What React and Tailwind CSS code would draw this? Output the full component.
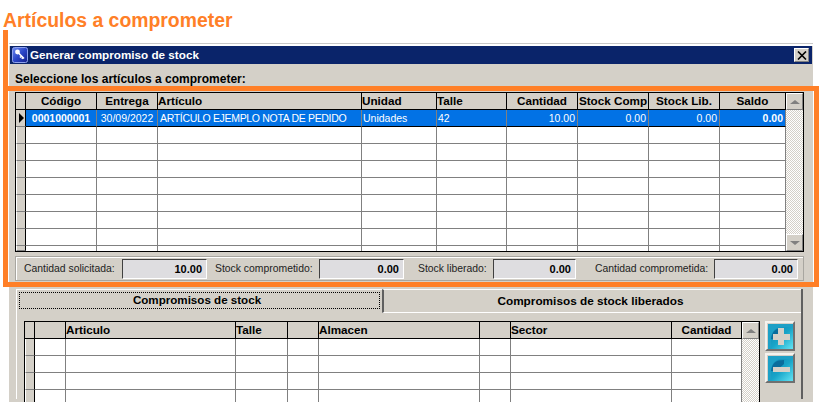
const orange = "bg-[#ff7f27]";

const topCols = "grid-cols-[10px_71px_61px_204px_75px_70px_71px_71px_71px_66px]";
const bottomCols = "grid-cols-[10px_31px_170px_52px_31px_161px_31px_161px_70px]";

const topHeaders = [
  ["", ""],
  ["Código", "text-center"],
  ["Entrega", "text-center"],
  ["Artículo", "text-left"],
  ["Unidad", "text-left"],
  ["Talle", "text-left"],
  ["Cantidad", "text-center"],
  ["Stock Comp", "text-center"],
  ["Stock Lib.", "text-center"],
  ["Saldo", "text-center"],
];

const bottomHeaders = [
  ["", ""],
  ["", ""],
  ["Articulo", "text-left"],
  ["Talle", "text-left"],
  ["", ""],
  ["Almacen", "text-left"],
  ["", ""],
  ["Sector", "text-left"],
  ["Cantidad", "text-center"],
];

const selected = [
  ["0001000001", "px-0.5 text-center font-bold"],
  ["30/09/2022", "px-0.5 text-center"],
  ["ARTÍCULO EJEMPLO NOTA DE PEDIDO", "px-0.5 text-left tracking-[-0.32px]"],
  ["Unidades", "px-px text-left"],
  ["42", "px-px text-left"],
  ["10.00", "px-0.5 text-right"],
  ["0.00", "px-0.5 text-right"],
  ["0.00", "px-0.5 text-right"],
  ["0.00", "px-0.5 text-right font-bold"],
];

function Raised({ className, children }) {
  return (
    <div className={"flex items-center justify-center bg-[#d4d0c8] border border-t-white border-l-white border-r-[#808080] border-b-[#808080] " + className}>
      {children}
    </div>
  );
}

function HeaderRow({ cols, headers }) {
  return (
    <div className={"grid h-[17px] " + cols}>
      {headers.map(([label, align], i) => (
        <div
          key={i}
          className={"h-[17px] overflow-hidden whitespace-nowrap border-r border-b border-black bg-[#d4d0c8] text-[11.7px] leading-[16px] font-bold text-black " + align}
        >
          {label}
        </div>
      ))}
    </div>
  );
}

function EmptyRow({ cols, count, height = "h-[17px]", last }) {
  return (
    <div className={"grid " + height + " " + cols}>
      <div className={"border-r border-b border-r-black border-b-[#808080] bg-[#d4d0c8] border-l border-l-white " + height} />
      {Array.from({ length: count }).map((_, i) => (
        <div key={i} className={"bg-white border-r border-[#808080] " + (last ? "" : "border-b ") + height} />
      ))}
    </div>
  );
}

function SelectedRow({ cols }) {
  return (
    <div className={"grid h-[17px] " + cols}>
      <div className="flex h-[17px] items-center justify-end border-r border-b border-r-black border-b-[#808080] bg-[#d4d0c8] pr-px">
        <div className="h-0 w-0 border-y-[5px] border-l-[5px] border-y-transparent border-l-black" />
      </div>
      {selected.map(([text, style], i) => (
        <div
          key={i}
          className={"h-[17px] overflow-hidden whitespace-nowrap border-r border-b border-[#808080] bg-[#0272e5] border-b-black text-[10.5px] leading-[16px] text-white " + style}
        >
          {text}
        </div>
      ))}
    </div>
  );
}

function Triangle({ up }) {
  return (
    <div
      className={
        "h-0 w-0 border-x-[5px] border-x-transparent " +
        (up ? "border-b-[4px] border-b-[#808080]" : "border-t-[4px] border-t-[#808080]")
      }
    />
  );
}

function ScrollBar({ withDown }) {
  return (
    <div className="flex w-[17px] flex-col bg-[repeating-conic-gradient(#d4d0c8_0_25%,#ffffff_0_50%)] bg-[length:2px_2px]">
      <Raised className="h-[17px] w-[17px] shrink-0">
        <Triangle up />
      </Raised>
      <div className="flex-1" />
      {withDown && (
        <Raised className="h-[17px] w-[17px] shrink-0">
          <Triangle />
        </Raised>
      )}
    </div>
  );
}

function SummaryField({ label, labelClass, fieldClass, value }) {
  return (
    <>
      <span className={"text-[10.4px] whitespace-nowrap text-[#222] " + labelClass}>{label}</span>
      <div className={"h-5 border border-t-[#404040] border-l-[#404040] border-r-white border-b-white bg-[#dedde0] pr-1 text-right text-[11px] leading-[19px] font-bold text-black " + fieldClass}>
        {value}
      </div>
    </>
  );
}

function KeyIcon() {
  return (
    <svg width="16" height="16" viewBox="0 0 16 16" className="shrink-0">
      <defs>
        <linearGradient id="keybg" x1="0" y1="0" x2="1" y2="1">
          <stop offset="0" stopColor="#6f8cf0" />
          <stop offset="0.5" stopColor="#2a46c8" />
          <stop offset="1" stopColor="#14208a" />
        </linearGradient>
      </defs>
      <rect x="0.5" y="0.5" width="15" height="15" rx="2" fill="url(#keybg)" stroke="#8fa3ee" />
      <circle cx="5.5" cy="5" r="2.4" fill="#fff" />
      <path d="M6.5 6 L12 11.5 M9.5 9 L8 10.5 M11 10.5 L9.8 11.8" stroke="#fff" strokeWidth="1.6" fill="none" />
    </svg>
  );
}

function ActionIcon({ id, minus }) {
  return (
    <svg width="25" height="25" viewBox="0 0 25 25">
      <defs>
        <linearGradient id={id} x1="0" y1="0" x2="1" y2="1">
          <stop offset="0" stopColor="#0d7fae" />
          <stop offset="0.55" stopColor="#18a4c8" />
          <stop offset="1" stopColor="#62e4f4" />
        </linearGradient>
      </defs>
      <rect width="25" height="25" fill={"url(#" + id + ")"} />
      <path d="M3 15 C4 6 8 3 16 3 L25 3 L25 0 L0 0 L0 25 L3 25 Z" fill="#1ea0c6" />
      <path d="M3 15 C4 7 8 4 16 4 L16 8 L8 15 Z" fill="#0a6d9c" />
      {minus ? (
        <rect x="5" y="11" width="17" height="5" fill="#d4d0c8" />
      ) : (
        <path d="M10 4 H16 V10 H22 V16 H16 V21 H10 V16 H5 V10 H10 Z" fill="#d4d0c8" />
      )}
    </svg>
  );
}

function ActionButton({ id, minus }) {
  return (
    <div className="flex h-[30px] w-[30px] items-center justify-center border-2 border-t-[#f4f2ee] border-l-[#f4f2ee] border-r-[#707070] border-b-[#707070] bg-[#d4d0c8]">
      <ActionIcon id={id} minus={minus} />
    </div>
  );
}

export default function App() {
  return (
    <div className="relative h-[402px] w-[836px] overflow-hidden bg-white font-['Liberation_Sans',Arial,sans-serif]">
      <h1 className="h-[43px] pt-[8px] pl-[3px] text-[19.4px] leading-[24px] font-bold text-[#ff7f27]">
        Artículos a comprometer
      </h1>

      <div className="ml-[9px] h-[359px] w-[804px] border-t border-[#c8c8c8]">
        <div className="h-[2px] bg-white" />
        <div className="h-[356px] border-x border-[#d4d0c8] bg-[#d4d0c8]">
          <div className="flex h-[18px] items-center gap-[2px] bg-[#0a246a] pr-[3px] pl-[2px]">
            <KeyIcon />
            <span className="flex-1 text-[11.7px] font-bold text-white">Generar compromiso de stock</span>
            <Raised className="h-[14px] w-[15px]">
              <svg width="10" height="9" viewBox="0 0 10 9">
                <path d="M1 0.5 L9 8.5 M9 0.5 L1 8.5" stroke="#000" strokeWidth="1.6" />
              </svg>
            </Raised>
          </div>

          <p className="h-7 pt-[7px] pl-[5px] text-[12px] leading-[16px] font-bold text-black">
            Seleccione los artículos a comprometer:
          </p>

          <div className="ml-[5px] flex h-[160px] w-[789px] border border-black">
            <div className="w-[770px]">
              <HeaderRow cols={topCols} headers={topHeaders} />
              <SelectedRow cols={topCols} />
              {Array.from({ length: 7 }).map((_, i) => (
                <EmptyRow key={i} cols={topCols} count={9} />
              ))}
              <EmptyRow cols={topCols} count={9} height="h-[5px]" last />
            </div>
            <ScrollBar withDown />
          </div>

          <div className="mt-1 ml-[5px] flex h-[25px] w-[789px] items-center border border-[#a8a6a0] [box-shadow:inset_1px_1px_0_#fff]">
            <SummaryField label="Cantidad solicitada:" labelClass="ml-2 w-[98px]" fieldClass="w-[85px]" value="10.00" />
            <SummaryField label="Stock comprometido:" labelClass="ml-2 w-[104px]" fieldClass="w-[85px]" value="0.00" />
            <SummaryField label="Stock liberado:" labelClass="ml-[14px] w-[75px]" fieldClass="w-[83px]" value="0.00" />
            <SummaryField label="Cantidad comprometida:" labelClass="ml-[19px] w-[119px]" fieldClass="w-[84px]" value="0.00" />
          </div>

          <div className="mt-2 ml-1.5 h-[110px] w-[787px] border-r-2 border-l border-r-[#606060] border-l-white">
            <div className="flex h-6">
              <div className="flex h-[23px] w-[365px] items-start border-t border-white px-0.5 pt-0.5">
                <div className="h-[17px] w-full border border-dotted border-black pr-[5px] text-center text-[11.6px] leading-[14px] font-bold text-black">
                  Compromisos de stock
                </div>
              </div>
              <div className="h-[24px] flex-1 border-t border-b border-l-2 border-t-white border-b-white border-l-[#606060] pr-1 text-center text-[11.8px] leading-[23px] font-bold text-black">
                Compromisos de stock liberados
              </div>
            </div>

            <div className="mt-2 ml-[7px] flex gap-[5px]">
              <div className="flex h-[90px] w-[736px] border-x border-t border-black">
                <div className="w-[717px]">
                  <HeaderRow cols={bottomCols} headers={bottomHeaders} />
                  {Array.from({ length: 5 }).map((_, i) => (
                    <EmptyRow key={i} cols={bottomCols} count={8} />
                  ))}
                </div>
                <ScrollBar />
              </div>
              <div className="flex flex-col gap-0.5">
                <ActionButton id="plusbg" />
                <ActionButton id="minusbg" minus />
              </div>
            </div>
          </div>
        </div>
      </div>

      {/* recuadro naranja sobre la ventana */}
      <div className={"absolute top-[30px] left-[3px] h-[257px] w-[5px] " + orange} />
      <div className="pointer-events-none absolute top-[86px] left-[3px] h-[201px] w-[816px] border-5 border-[#ff7f27]" />
    </div>
  );
}
